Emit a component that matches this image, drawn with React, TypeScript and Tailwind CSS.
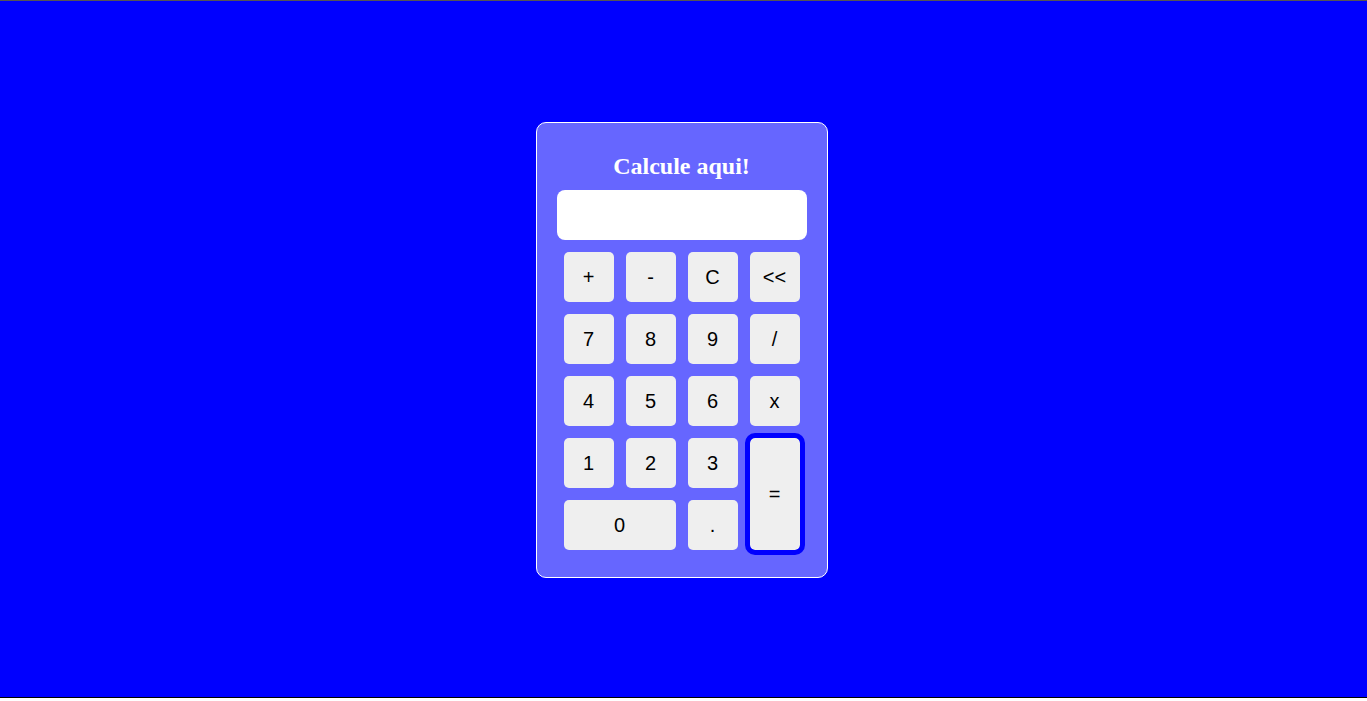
import React from "react";

const keys: { label: string }[] = [
  { label: "+" },
  { label: "-" },
  { label: "C" },
  { label: "<<" },
  { label: "7" },
  { label: "8" },
  { label: "9" },
  { label: "/" },
  { label: "4" },
  { label: "5" },
  { label: "6" },
  { label: "x" },
  { label: "1" },
  { label: "2" },
  { label: "3" },
];

export default function App() {
  return (
    <div className="flex h-[701px] w-full flex-col bg-white">
      <div className="h-px w-full bg-[#555555]" />
      <div className="flex h-[696px] w-full items-center justify-center bg-[#0000ff] pr-[4px] pt-[2px]">
        <div className="flex w-[292px] flex-col rounded-[10px] border border-white bg-[#6666ff] px-[20px] pt-[28px] pb-[27px]">
          <h2
            className="h-[30px] text-center text-[24px] font-bold leading-[30px] text-white"
            style={{ fontFamily: '"Liberation Serif", "Times New Roman", serif' }}
          >
            Calcule aqui!
          </h2>
          <div className="mt-[9px] h-[50px] w-[250px] rounded-[8px] bg-white" />
          <div
            className="mx-auto mt-[12px] grid w-[236px] grid-cols-[repeat(4,50px)] grid-rows-[repeat(5,50px)] gap-[12px]"
            style={{ fontFamily: '"Liberation Sans", Arial, sans-serif' }}
          >
            {keys.map((k) => (
              <button
                key={k.label}
                className="flex items-center justify-center rounded-[5px] bg-[#efefef] text-[20px] text-black"
              >
                {k.label}
              </button>
            ))}
            <button className="col-start-4 row-span-2 row-start-4 flex items-center justify-center rounded-[5px] bg-[#efefef] text-[20px] text-black outline outline-[5px] outline-[#0000ff]">
              =
            </button>
            <button className="col-span-2 col-start-1 row-start-5 flex items-center justify-center rounded-[5px] bg-[#efefef] text-[20px] text-black">
              0
            </button>
            <button className="col-start-3 row-start-5 flex items-center justify-center rounded-[5px] bg-[#efefef] text-[20px] text-black">
              .
            </button>
          </div>
        </div>
      </div>
      <div className="h-px w-full bg-black" />
    </div>
  );
}
